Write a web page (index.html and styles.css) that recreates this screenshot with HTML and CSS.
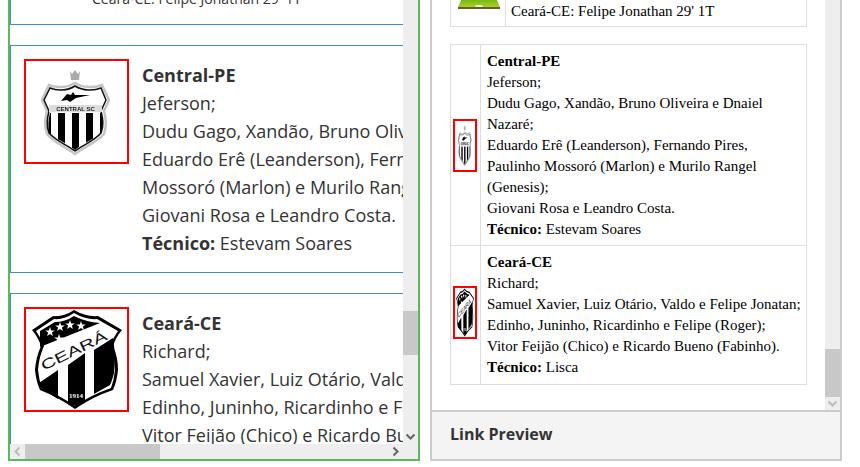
FILE: index.html
```html
<!DOCTYPE html>
<html>
    <head>
        <title>Link Preview</title>
        <link rel="stylesheet" href="styles.css">
    </head>
    <body>
        <div class="panel editor">
            <div class="view">
                <div class="scrolled">
                    <div class="card first">
                        <p class="goal">Ceará-CE: Felipe Jonathan 29' 1T</p>
                    </div>

                    <div class="card">
                        <div class="logo">
                            <svg class="crest soft" viewBox="0 0 101 101">
                                <defs>
                                    <path id="star" d="M0-5L1.200-1.600 4.800-1.500 1.900 .6 2.900 4 0 2-2.900 4-1.900 .6-4.800-1.500-1.200-1.600Z" fill="#fff"/>
                                    <clipPath id="lower">
                                        <path d="M24 52h51c2 7 2 13 0 20-8 7-18 10-26 17-8-7-18-10-26-17-1-7-1-13 1-20z"/>
                                    </clipPath>
                                    <linearGradient id="turf" x1="0" y1="0" x2="0" y2="1">
                                        <stop offset="0" stop-color="#6fae12"/>
                                        <stop offset="1" stop-color="#a6d321"/>
                                    </linearGradient>
                                    <symbol id="central" viewBox="0 0 101 101" preserveAspectRatio="none">
                                        <path d="M44 10l2 3 3-4 3 4 2-3-1 9h-8z" fill="#aaa"/>
                                        <path d="M49 22C57 27 69 27 76 24L83 39 78 50C80 58 81 64 78 73 70 82 58 86 49 93 40 86 28 82 21 73 18 64 19 58 21 50L16 39 23 24C30 27 41 27 49 22Z" fill="#fff" stroke="#c4c4c4" stroke-width="2.500"/>
                                        <path d="M49 25C57 30 68 30 75 27L80 39 75 50C77 58 78 64 75 72 68 80 57 84 49 90 41 84 30 80 23 72 20 64 21 58 23 50L18 39 24 27C31 30 41 30 49 25Z" fill="#fff" stroke="#111" stroke-width="1.500"/>
                                        <path d="M35 40l6-7 4 1 2-3 2 3 15 0-14 3-6 4-3-2z" fill="#000"/>
                                        <rect x="23" y="44" width="53" height="7" fill="#ddd"/>
                                        <text x="49.500" y="49.800" class="crest-name">CENTRAL SC</text>
                                        <g clip-path="url(#lower)">
                                            <path d="M20 52h5v30h-5zM32 52h7v40h-7zM46 52h7v40h-7zM60 52h7v40h-7zM74 52h5v30h-5z" fill="#000"/>
                                        </g>
                                    </symbol>
                                    <symbol id="ceara" viewBox="0 0 101 101" preserveAspectRatio="none">
                                        <path d="M48 1Q60 8 72 7L96 21Q90 28 87 37 92 48 92 61 91 72 87 81 66 88 49 100 32 88 14 81 10 72 9 61 10 48 15 37 12 28 6 21L27 7Q38 8 48 1Z" fill="#000"/>
                                        <path d="M48 4Q60 11 71 10L92 22Q87 29 84 37 89 48 89 61 88 71 85 79 65 86 49 97 33 86 16 79 13 71 12 61 13 48 18 37 15 29 10 22L28 10Q38 11 48 4Z" fill="#fff"/>
                                        <path d="M14 22L29 13Q39 13 48 7 60 13 74 14L14 38Z" fill="#000"/>
                                        <path d="M13 74L32 61V90L18 81Q14 78 13 74ZM42 56L59 44V94L49 97 42 94ZM68 41L87 29Q90 48 88 64 86 72 84 76L68 85Z" fill="#000"/>
                                        <use href="#star" x="24" y="23"/>
                                        <use href="#star" x="34" y="18"/>
                                        <use href="#star" x="44" y="16"/>
                                        <use href="#star" x="55" y="17"/>
                                        <use href="#star" x="33" y="30"/>
                                        <text x="50" y="46" class="crest-ceara" textLength="72" lengthAdjust="spacingAndGlyphs" transform="rotate(-26 50 46)">CEARÁ</text>
                                        <text x="50" y="89" class="crest-year">1914</text>
                                    </symbol>
                                </defs>
                                <use href="#central"/>
                            </svg>
                        </div>
                        <div class="lineup">
                            <b>Central-PE</b><br>
                            Jeferson;<br>
                            Dudu Gago, Xandão, Bruno Oliveira e Dnaiel Nazaré;<br>
                            Eduardo Erê (Leanderson), Fernando Pires, Paulinho<br>
                            Mossoró (Marlon) e Murilo Rangel (Genesis);<br>
                            Giovani Rosa e Leandro Costa.<br>
                            <b>Técnico:</b> Estevam Soares
                        </div>
                    </div>

                    <div class="card">
                        <div class="logo">
                            <svg class="crest" viewBox="0 0 101 101"><use href="#ceara"/></svg>
                        </div>
                        <div class="lineup">
                            <b>Ceará-CE</b><br>
                            Richard;<br>
                            Samuel Xavier, Luiz Otário, Valdo e Felipe Jonatan;<br>
                            Edinho, Juninho, Ricardinho e Felipe (Roger);<br>
                            Vitor Feijão (Chico) e Ricardo Bueno (Fabinho).<br>
                            <b>Técnico:</b> Lisca
                        </div>
                    </div>
                </div>
            </div>
            <div class="vbar">
                <div class="track thumb-top"></div>
                <div class="thumb thumb-left"></div>
                <div class="track"></div>
                <svg class="arrow" viewBox="0 0 15 15"><path d="M3.500 5.500l4 4 4-4" /></svg>
            </div>
            <div class="hbar">
                <svg class="arrow off" viewBox="0 0 15 15"><path d="M9.500 3.500l-4 4 4 4" /></svg>
                <div class="thumb hthumb"></div>
                <div class="track"></div>
                <svg class="arrow" viewBox="0 0 15 15"><path d="M5.500 3.500l4 4-4 4" /></svg>
            </div>
            <div class="corner"></div>
        </div>

        <div class="panel preview">
            <div class="preview-body">
                <div class="preview-view">
                    <table class="goals">
                        <tr>
                            <td class="pitch-cell">
                                <svg class="pitch" viewBox="0 0 42 12">
                                    <path d="M4 0h34l4 9H0z" fill="url(#turf)"/>
                                    <path d="M18 7h6l1 2h-8z" fill="#e6f3bd"/>
                                    <rect y="9" width="42" height="2" fill="#6b5a3a"/>
                                </svg>
                            </td>
                            <td class="goal-text">Ceará-CE: Felipe Jonathan 29' 1T</td>
                        </tr>
                    </table>
                    <table class="teams">
                        <tr>
                            <td class="small-logo">
                                <div class="mini"><svg class="mini-crest soft-mini"><use href="#central" width="100%" height="100%"/></svg></div>
                            </td>
                            <td>
                                <b>Central-PE</b><br>
                                Jeferson;<br>
                                Dudu Gago, Xandão, Bruno Oliveira e Dnaiel Nazaré;<br>
                                Eduardo Erê (Leanderson), Fernando Pires, Paulinho Mossoró (Marlon) e Murilo Rangel (Genesis);<br>
                                Giovani Rosa e Leandro Costa.<br>
                                <b>Técnico:</b> Estevam Soares
                            </td>
                        </tr>
                        <tr>
                            <td class="small-logo">
                                <div class="mini"><svg class="mini-crest"><use href="#ceara" width="100%" height="100%"/></svg></div>
                            </td>
                            <td>
                                <b>Ceará-CE</b><br>
                                Richard;<br>
                                Samuel Xavier, Luiz Otário, Valdo e Felipe Jonatan;<br>
                                Edinho, Juninho, Ricardinho e Felipe (Roger);<br>
                                Vitor Feijão (Chico) e Ricardo Bueno (Fabinho).<br>
                                <b>Técnico:</b> Lisca
                            </td>
                        </tr>
                    </table>
                </div>
                <div class="vbar slim">
                    <div class="track"></div>
                    <div class="thumb thumb-right"></div>
                    <svg class="arrow off" viewBox="0 0 15 13"><path d="M3.500 4.500l4 4 4-4" /></svg>
                </div>
            </div>
            <div class="preview-title">Link Preview</div>
        </div>
    </body>
</html>
```

FILE: styles.css
```css
html, body {
    margin: 0;
    height: 467px;
    overflow: hidden;
    background: #fff;
}
body {
    display: flex;
    gap: 10px;
    padding: 0 18px 6px 8px;
    box-sizing: border-box;
}
.panel {
    width: 412px;
    box-sizing: border-box;
    overflow: hidden;
}

/* left panel */
.editor {
    border: 2px solid #5cb85c;
    border-top: none;
    display: grid;
    grid-template-columns: 393px 15px;
    grid-template-rows: 444px 15px;
    font-family: "Open Sans", sans-serif;
    color: #333;
}
.view {
    overflow: hidden;
}
.scrolled {
    width: 620px;
}
.card {
    display: flex;
    border: 1px solid #428bca;
    padding: 13px;
    margin-bottom: 20px;
    height: 200px;
}
.card.first {
    height: 24px;
    padding: 0;
    border-top: none;
}
.goal {
    margin: -11px 0 0 81px;
    font-size: 14px;
    line-height: 20px;
    white-space: nowrap;
}
.logo {
    width: 101px;
    height: 101px;
    border: 2px solid #f00;
    flex-shrink: 0;
    background: #fff;
}
.crest {
    display: block;
    width: 101px;
    height: 101px;
}
.soft {
    filter: blur(0.5px);
}
.crest-name {
    font: bold 6px "Liberation Sans", sans-serif;
    text-anchor: middle;
    fill: #222;
}
.crest-ceara {
    font: 14px "Liberation Sans", sans-serif;
    text-anchor: middle;
    fill: #111;
}
.crest-year {
    font: bold 7px "Liberation Serif", serif;
    text-anchor: middle;
    fill: #fff;
}
.lineup {
    margin-left: 13px;
    padding-top: 2px;
    font-size: 18px;
    line-height: 28px;
    white-space: nowrap;
}

/* scrollbars */
.vbar {
    display: flex;
    flex-direction: column;
    background: #eee;
    width: 15px;
}
.hbar {
    display: flex;
    background: #eee;
    height: 15px;
}
.track {
    flex: 1;
    background: #eee;
}
.thumb {
    background: #c8c8c8;
}
.thumb-top {
    flex: none;
    height: 311px;
}
.thumb-left {
    height: 44px;
}
.thumb-right {
    height: 48px;
}
.hthumb {
    width: 135px;
}
.arrow {
    display: block;
    width: 15px;
    height: 15px;
    flex-shrink: 0;
}
.arrow path {
    fill: none;
    stroke: #666;
    stroke-width: 2;
}
.arrow.off path {
    stroke: #bbb;
}
.vbar.slim .arrow {
    height: 13px;
}
.corner {
    background: #eee;
}

/* right panel */
.preview {
    border: 2px solid #ccc;
    border-top: none;
    display: flex;
    flex-direction: column;
}
.preview-body {
    display: flex;
    height: 410px;
    border-bottom: 2px solid #ccc;
    flex-shrink: 0;
}
.preview-view {
    width: 393px;
    padding-left: 18px;
    box-sizing: border-box;
    overflow: hidden;
    font-family: "Liberation Serif", serif;
    font-size: 15px;
    line-height: 21px;
    color: #000;
}
.goals, .teams {
    border-collapse: collapse;
    width: 357px;
}
.goals td, .teams td {
    border: 1px solid #ddd;
    padding: 6px 5px 5px 6px;
    vertical-align: middle;
}
.teams tr:last-child td {
    padding-bottom: 6px;
}
.goals td {
    border-top: none;
}
.goals .pitch-cell {
    width: 44px;
    vertical-align: top;
    padding: 0 5px;
}
.pitch {
    display: block;
    width: 42px;
    height: 12px;
    margin: -2px 0 0 2px;
}
.goals .goal-text {
    padding: 1px 5px 4px;
}
.teams {
    margin-top: 17px;
}
.teams .small-logo {
    width: 24px;
    padding: 0 3px 0 2px;
}
.mini {
    width: 20px;
    height: 49px;
    border: 2px solid #f00;
}
.mini-crest {
    display: block;
    width: 20px;
    height: 49px;
}
.soft-mini {
    filter: blur(0.3px);
}
.preview-title {
    flex: 1;
    background: #f4f4f4;
    padding: 11px 18px;
    font: bold 16px/22px "Open Sans", sans-serif;
    color: #333;
}
```
